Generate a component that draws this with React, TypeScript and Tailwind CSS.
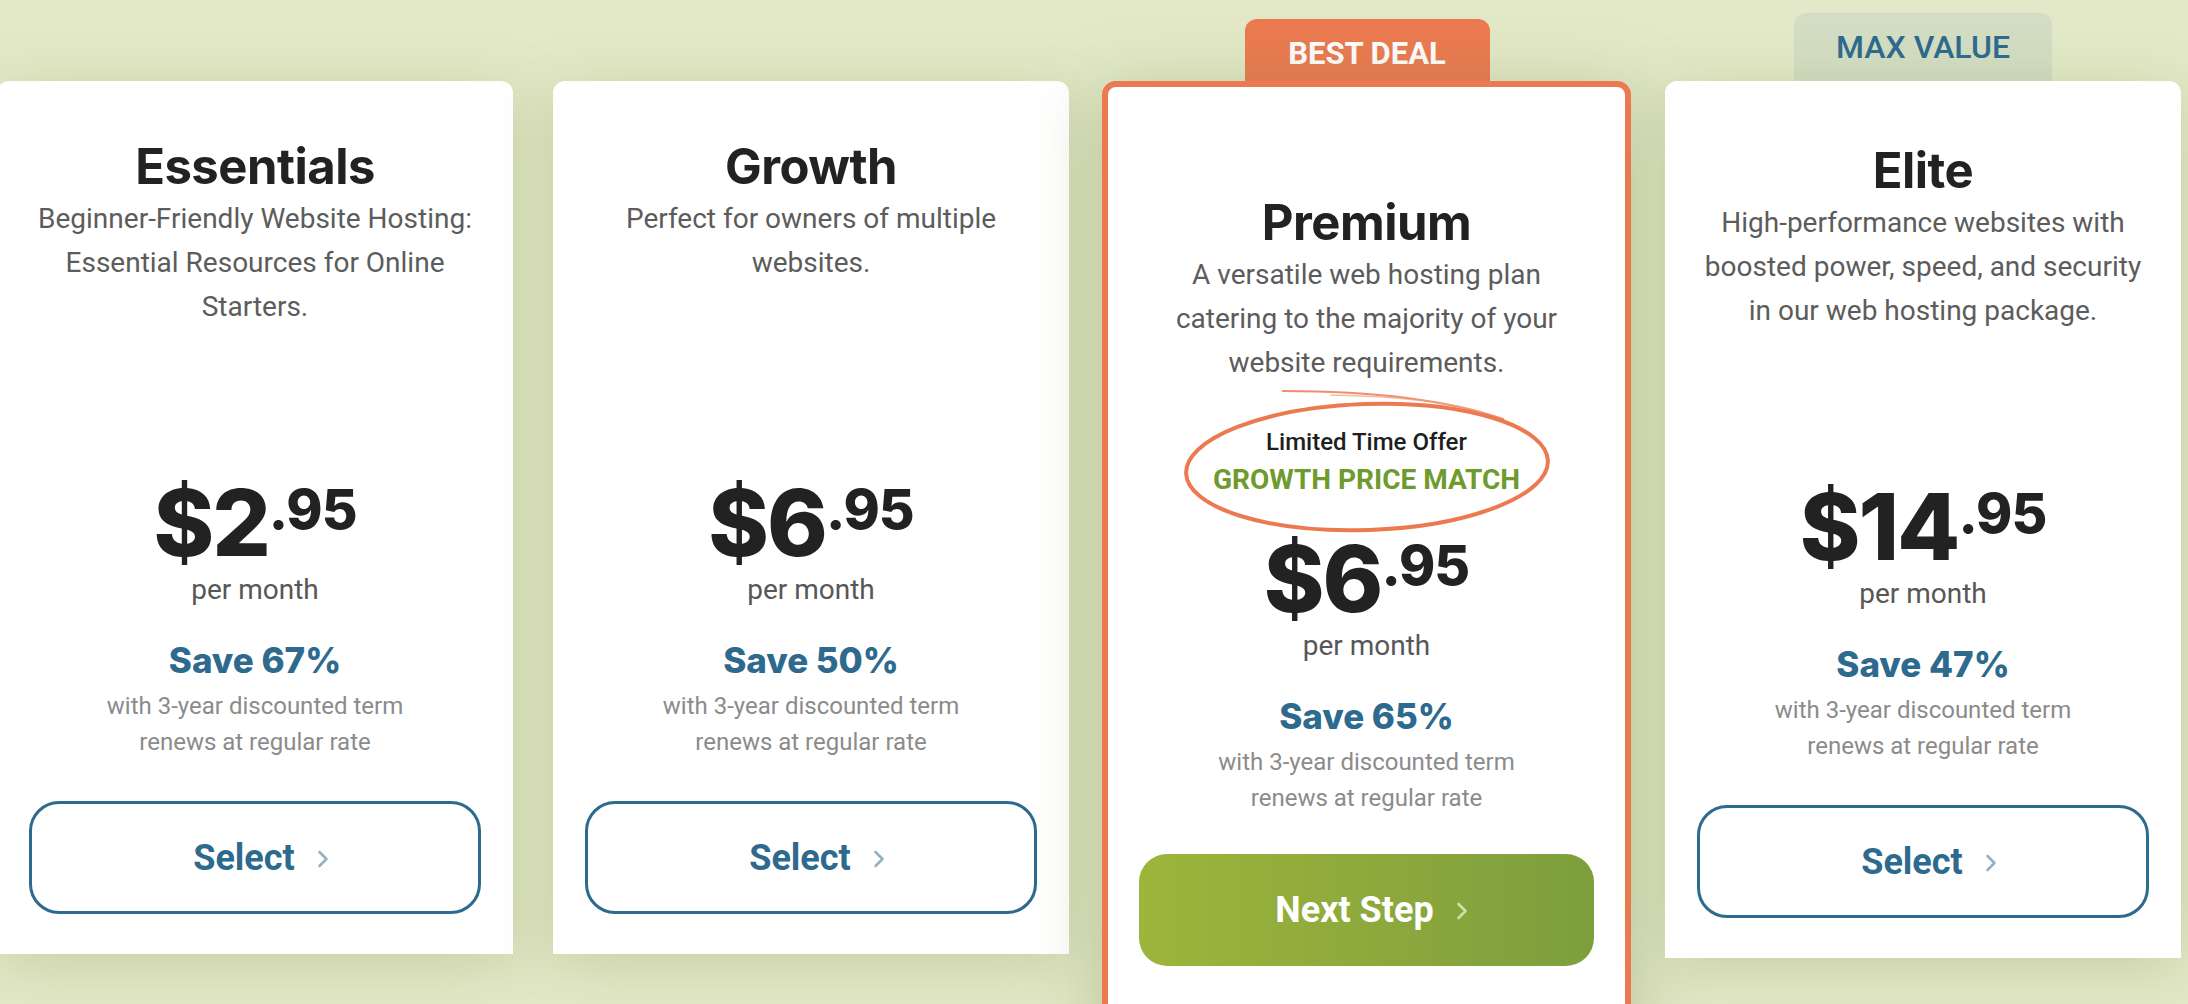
import React from "react";

function Chevron({ color }: { color: string }) {
  return (
    <svg width="12" height="20" viewBox="0 0 12 20" className="ml-[22px] mt-[2px]">
      <polyline points="2.5,3 9.5,10 2.5,17" fill="none" stroke={color} strokeWidth="2.6" strokeLinecap="round" strokeLinejoin="round" />
    </svg>
  );
}

function Price({ whole, cents }: { whole: string; cents: string }) {
  return (
    <div className="flex justify-center items-start h-[96px] pt-[3px] text-[#222222] font-['Inter',sans-serif] font-extrabold leading-none">
      <span className="text-[92px] leading-none tracking-[-2px]">{whole}</span>
      <span className="text-[55px] leading-none mt-[5px] tracking-[-1px]">.{cents}</span>
    </div>
  );
}

function Bottom({ save, button }: { save: string; button: React.ReactNode }) {
  return (
    <>
      <div className="mt-[2px] text-center text-[28px] leading-[36px] text-[#575757] font-['Roboto',sans-serif]">per month</div>
      <div className="mt-[30px] text-center text-[35px] leading-[44px] font-extrabold text-[#2d6a8e] font-['Inter',sans-serif]">{save}</div>
      <div className="mt-[6px] text-center text-[24px] leading-[36px] text-[#8b8b8b] font-['Roboto',sans-serif]">
        with 3-year discounted term
        <br />
        renews at regular rate
      </div>
      {button}
    </>
  );
}

function SelectButton({ mt }: { mt: string }) {
  return (
    <div className={`${mt} mx-[32px] h-[113px] rounded-[30px] border-[3px] border-[#2d6a8e] flex items-center justify-center pl-[12px] font-['Roboto',sans-serif]`}>
      <span className="text-[36px] font-bold text-[#2d6a8e] leading-none">Select</span>
      <Chevron color="#93b2c6" />
    </div>
  );
}

function Title({ children }: { children: React.ReactNode }) {
  return (
    <h2 className="text-center text-[49px] leading-[60px] font-bold text-[#222222] font-['Inter',sans-serif] tracking-[-0.5px]">
      {children}
    </h2>
  );
}

function Desc({ children, h }: { children: React.ReactNode; h: string }) {
  return (
    <p className={`${h} text-center text-[28px] leading-[44px] text-[#5c5c5c] font-['Roboto',sans-serif]`}>{children}</p>
  );
}

function PlainCard({
  pt,
  title,
  desc,
  whole,
  cents,
  save,
}: {
  pt: string;
  title: string;
  desc: React.ReactNode;
  whole: string;
  cents: string;
  save: string;
}) {
  return (
    <div className={`w-[516px] bg-white rounded-t-[12px] ${pt} pb-[40px] shadow-[0_10px_60px_rgba(120,140,70,0.28)]`}>
      <Title>{title}</Title>
      <Desc h="h-[277px]">{desc}</Desc>
      <Price whole={whole} cents={cents} />
      <Bottom save={save} button={<SelectButton mt="mt-[41px]" />} />
    </div>
  );
}

function Ellipse() {
  return (
    <svg
      width="380"
      height="152"
      viewBox="0 0 380 152"
      className="absolute left-[73px] top-0 pointer-events-none"
    >
      <g transform="rotate(-2 186 82)">
        <ellipse cx="186" cy="82" rx="181" ry="63" fill="none" stroke="#ec7a51" strokeWidth="4" />
      </g>
      <path d="M 102 6 Q 240 6 322 34" fill="none" stroke="#ec7a51" strokeWidth="2.2" strokeLinecap="round" opacity="0.85" />
      <path d="M 150 10 Q 250 12 300 27" fill="none" stroke="#f2a080" strokeWidth="1.4" strokeLinecap="round" opacity="0.7" />
    </svg>
  );
}

export default function App() {
  return (
    <div className="h-screen w-full overflow-hidden bg-[#e3e9c8]">
      <div className="flex items-start gap-[40px] w-[2184px] ml-[-3px]">
        {/* Essentials */}
        <div className="w-[516px] shrink-0 flex flex-col">
          <div className="h-[81px]" />
          <PlainCard
            pt="pt-[56px]"
            title="Essentials"
            desc={
              <>
                Beginner-Friendly Website Hosting:
                <br />
                Essential Resources for Online
                <br />
                Starters.
              </>
            }
            whole="$2"
            cents="95"
            save="Save 67%"
          />
        </div>

        {/* Growth */}
        <div className="w-[516px] shrink-0 flex flex-col">
          <div className="h-[81px]" />
          <PlainCard
            pt="pt-[56px]"
            title="Growth"
            desc={
              <>
                Perfect for owners of multiple
                <br />
                websites.
              </>
            }
            whole="$6"
            cents="95"
            save="Save 50%"
          />
        </div>

        {/* Premium */}
        <div className="w-[516px] shrink-0 flex flex-col items-center">
          <div className="mt-[19px] h-[62px] w-[245px] rounded-t-[12px] bg-[#ec7a51] flex items-center justify-center pt-[6px]">
            <span className="text-white text-[31px] font-bold leading-none font-['Roboto',sans-serif]">BEST DEAL</span>
          </div>
          <div className="w-[529px] ml-[-7px] mr-[-6px] self-start bg-white border-[6px] border-[#ec7a51] rounded-t-[14px] pt-[106px] pb-[200px] shadow-[0_10px_70px_rgba(110,130,60,0.35)]">
            <Title>Premium</Title>
            <Desc h="h-[132px]">
              A versatile web hosting plan
              <br />
              catering to the majority of your
              <br />
              website requirements.
            </Desc>
            <div className="relative pt-[41px] h-[145px] font-['Roboto',sans-serif] text-center">
              <Ellipse />
              <div className="relative text-[24px] leading-[32px] font-medium text-[#1e1e1e]">Limited Time Offer</div>
              <div className="relative mt-[2px] text-[28px] leading-[40px] font-bold text-[#6f9a2e]">GROWTH PRICE MATCH</div>
            </div>
            <Price whole="$6" cents="95" />
            <Bottom
              save="Save 65%"
              button={
                <div className="mt-[38px] mx-[31px] h-[112px] rounded-[28px] bg-linear-to-r from-[#9db53a] to-[#7e9e3e] flex items-center justify-center pl-[10px] font-['Roboto',sans-serif]">
                  <span className="text-[36px] font-bold text-white leading-none">Next Step</span>
                  <Chevron color="#d3e0a6" />
                </div>
              }
            />
          </div>
        </div>

        {/* Elite */}
        <div className="w-[516px] shrink-0 flex flex-col items-center">
          <div className="mt-[13px] h-[68px] w-[258px] rounded-t-[12px] bg-[#d3ddc3] flex items-center justify-center">
            <span className="text-[#2d6a8e] text-[32px] font-medium leading-none font-['Roboto',sans-serif]">MAX VALUE</span>
          </div>
          <PlainCard
            pt="pt-[60px]"
            title="Elite"
            desc={
              <>
                High-performance websites with
                <br />
                boosted power, speed, and security
                <br />
                in our web hosting package.
              </>
            }
            whole="$14"
            cents="95"
            save="Save 47%"
          />
        </div>
      </div>
    </div>
  );
}
